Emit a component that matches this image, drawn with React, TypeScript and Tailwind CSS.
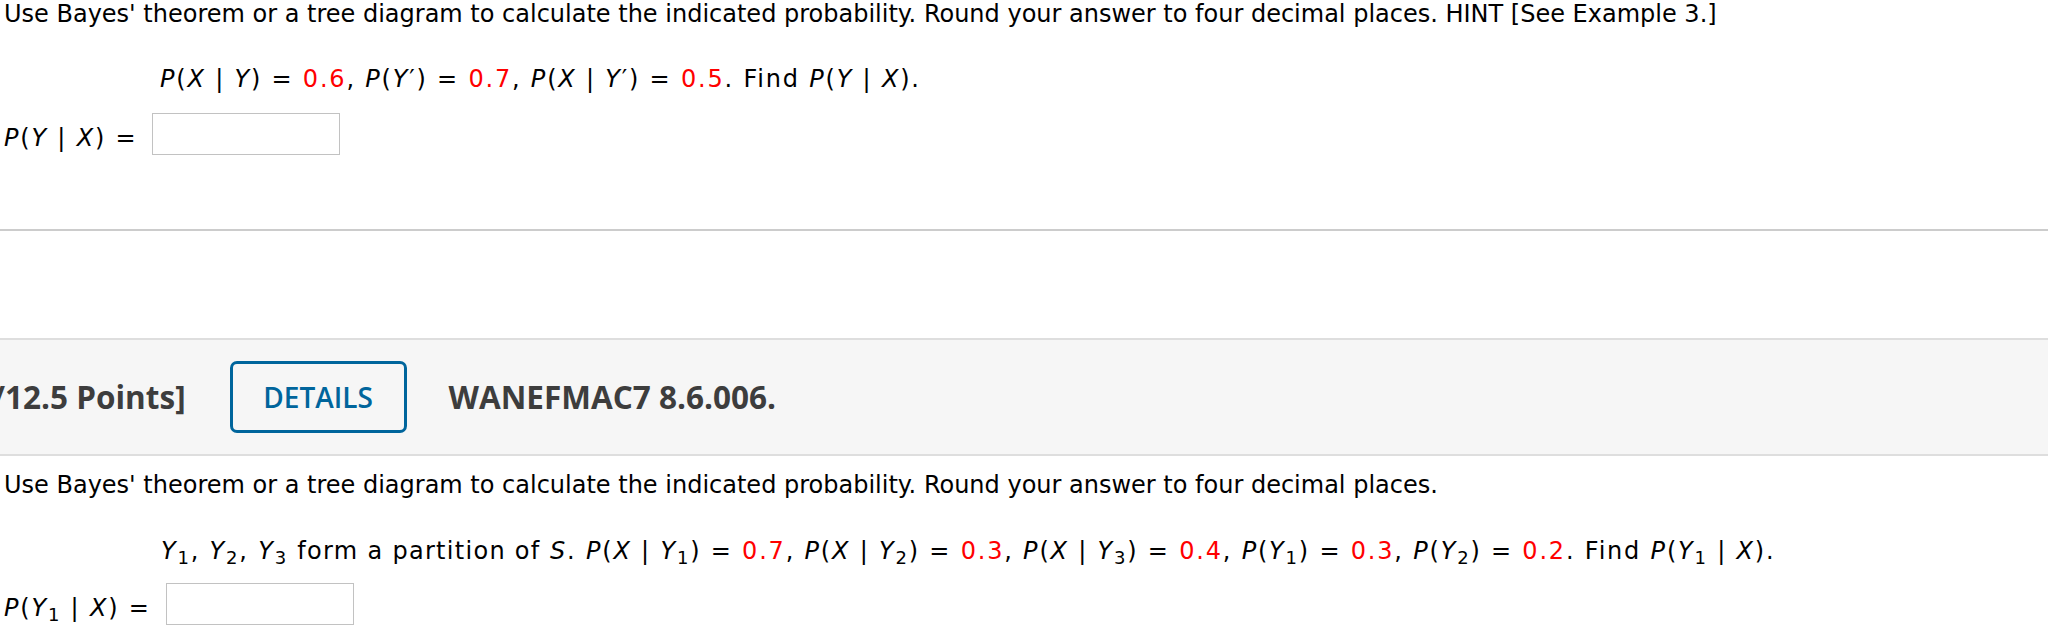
import type { ReactNode } from "react";

const Var = ({ children }: { children: ReactNode }) => <span className="italic">{children}</span>;
const Val = ({ children }: { children: ReactNode }) => <span className="text-[#ff0000]">{children}</span>;

function AnswerRow({ label }: { label: ReactNode }) {
  return (
    <div className="flex items-start">
      <div className="mt-[11px] whitespace-nowrap tracking-[1.8px]">{label}</div>
      <input
        type="text"
        aria-label="answer"
        className="ml-[15px] h-[42px] w-[188px] border border-[#c2c2c2] bg-white outline-none"
      />
    </div>
  );
}

export default function App() {
  return (
    <div className="h-[636px] w-full overflow-hidden bg-white text-black">
      {/* question 1 */}
      <div className="pl-1 font-['DejaVu_Sans',Verdana,sans-serif] text-[24px] leading-[28px]">
        <p className="whitespace-nowrap">
          Use Bayes' theorem or a tree diagram to calculate the indicated probability. Round your answer to four
          decimal places. HINT [See Example 3.]
        </p>
        <p className="mt-[37px] ml-[156px] whitespace-nowrap tracking-[1.8px]">
          <Var>P</Var>(<Var>X</Var> | <Var>Y</Var>) = <Val>0.6</Val>, <Var>P</Var>(<Var>Y</Var>′) ={" "}
          <Val>0.7</Val>, <Var>P</Var>(<Var>X</Var> | <Var>Y</Var>′) = <Val>0.5</Val>. Find <Var>P</Var>(
          <Var>Y</Var> | <Var>X</Var>).
        </p>
        <div className="mt-[20px]">
          <AnswerRow
            label={
              <>
                <Var>P</Var>(<Var>Y</Var> | <Var>X</Var>) =
              </>
            }
          />
        </div>
      </div>

      <div className="mt-[74px] h-[2px] bg-[#cccccc]" />

      {/* question 2 header */}
      <div className="mt-[107px] flex h-[118px] items-center border-y-2 border-[#dedede] bg-[#f6f6f6] font-['Open_Sans',sans-serif] text-[31.5px] leading-[40px] text-[#3d3d3d]">
        <span className="-ml-[8px] whitespace-nowrap font-bold">/12.5 Points]</span>
        <button className="ml-[44px] flex h-[72px] w-[177px] items-center justify-center rounded-[7px] border-[3px] border-[#00659c] text-[28px] font-semibold text-[#00659c]">
          DETAILS
        </button>
        <span className="ml-[42px] whitespace-nowrap font-bold">WANEFMAC7 8.6.006.</span>
      </div>

      {/* question 2 */}
      <div className="pl-1 font-['DejaVu_Sans',Verdana,sans-serif] text-[24px] leading-[28px]">
        <p className="mt-[15px] whitespace-nowrap">
          Use Bayes' theorem or a tree diagram to calculate the indicated probability. Round your answer to four
          decimal places.
        </p>
        <p className="mt-[38px] ml-[157px] whitespace-nowrap tracking-[1.8px]">
          <Var>Y</Var>
          <sub>1</sub>, <Var>Y</Var>
          <sub>2</sub>, <Var>Y</Var>
          <sub>3</sub> <span className="tracking-[1.3px]">form a partition of</span> <Var>S</Var>.{" "}
          <Var>P</Var>(<Var>X</Var> | <Var>Y</Var>
          <sub>1</sub>) = <Val>0.7</Val>, <Var>P</Var>(<Var>X</Var> | <Var>Y</Var>
          <sub>2</sub>) = <Val>0.3</Val>, <Var>P</Var>(<Var>X</Var> | <Var>Y</Var>
          <sub>3</sub>) = <Val>0.4</Val>, <Var>P</Var>(<Var>Y</Var>
          <sub>1</sub>) = <Val>0.3</Val>, <Var>P</Var>(<Var>Y</Var>
          <sub>2</sub>) = <Val>0.2</Val>. Find <Var>P</Var>(<Var>Y</Var>
          <sub>1</sub> | <Var>X</Var>).
        </p>
        <div className="mt-[18px]">
          <AnswerRow
            label={
              <>
                <Var>P</Var>(<Var>Y</Var>
                <sub>1</sub> | <Var>X</Var>) =
              </>
            }
          />
        </div>
      </div>
    </div>
  );
}
